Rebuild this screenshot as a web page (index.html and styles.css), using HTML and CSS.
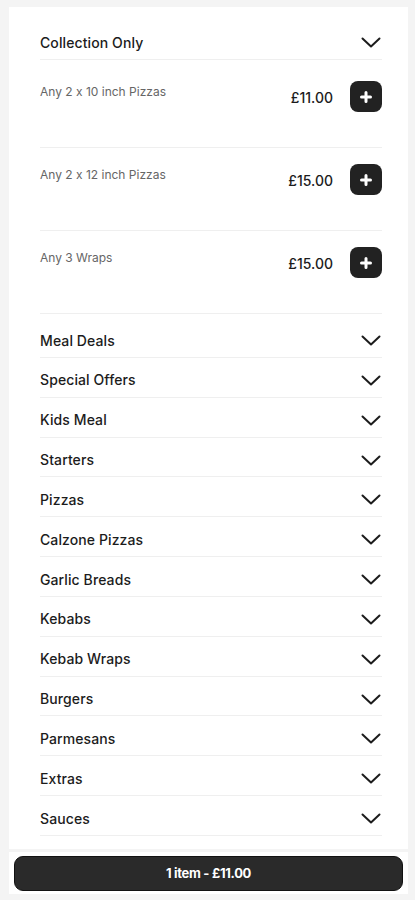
FILE: index.html
```html
<!DOCTYPE html>
<html lang="en">
<head>
<meta charset="utf-8">
<title>Menu</title>
<link rel="stylesheet" href="styles.css">
</head>
<body>
<div class="page">
  <main class="card">
    <section class="group">
      <div class="group-head">
        <span class="cat-title">Collection Only</span>
        <svg class="chev" viewBox="0 0 20 11" width="20" height="11"><path d="M1.5 1.5 L10 9.5 L18.5 1.5" fill="none" stroke="#1c1c1c" stroke-width="2" stroke-linecap="round" stroke-linejoin="round"/></svg>
      </div>
      <div class="item first">
        <span class="item-name">Any 2 x 10 inch Pizzas</span>
        <div class="item-right">
          <span class="price">£11.00</span>
          <button class="add"><svg viewBox="0 0 12 12" width="12" height="12"><path d="M6 1.5 V10.5 M1.5 6 H10.5" stroke="#fff" stroke-width="3" stroke-linecap="round"/></svg></button>
        </div>
      </div>
      <div class="item">
        <span class="item-name">Any 2 x 12 inch Pizzas</span>
        <div class="item-right">
          <span class="price">£15.00</span>
          <button class="add"><svg viewBox="0 0 12 12" width="12" height="12"><path d="M6 1.5 V10.5 M1.5 6 H10.5" stroke="#fff" stroke-width="3" stroke-linecap="round"/></svg></button>
        </div>
      </div>
      <div class="item">
        <span class="item-name">Any 3 Wraps</span>
        <div class="item-right">
          <span class="price">£15.00</span>
          <button class="add"><svg viewBox="0 0 12 12" width="12" height="12"><path d="M6 1.5 V10.5 M1.5 6 H10.5" stroke="#fff" stroke-width="3" stroke-linecap="round"/></svg></button>
        </div>
      </div>
    </section>
    <ul class="cats">
      <li class="cat first"><span class="cat-title">Meal Deals</span><svg class="chev" viewBox="0 0 20 11" width="20" height="11"><path d="M1.5 1.5 L10 9.5 L18.5 1.5" fill="none" stroke="#1c1c1c" stroke-width="2" stroke-linecap="round" stroke-linejoin="round"/></svg></li>
      <li class="cat"><span class="cat-title">Special Offers</span><svg class="chev" viewBox="0 0 20 11" width="20" height="11"><path d="M1.5 1.5 L10 9.5 L18.5 1.5" fill="none" stroke="#1c1c1c" stroke-width="2" stroke-linecap="round" stroke-linejoin="round"/></svg></li>
      <li class="cat"><span class="cat-title">Kids Meal</span><svg class="chev" viewBox="0 0 20 11" width="20" height="11"><path d="M1.5 1.5 L10 9.5 L18.5 1.5" fill="none" stroke="#1c1c1c" stroke-width="2" stroke-linecap="round" stroke-linejoin="round"/></svg></li>
      <li class="cat"><span class="cat-title">Starters</span><svg class="chev" viewBox="0 0 20 11" width="20" height="11"><path d="M1.5 1.5 L10 9.5 L18.5 1.5" fill="none" stroke="#1c1c1c" stroke-width="2" stroke-linecap="round" stroke-linejoin="round"/></svg></li>
      <li class="cat"><span class="cat-title">Pizzas</span><svg class="chev" viewBox="0 0 20 11" width="20" height="11"><path d="M1.5 1.5 L10 9.5 L18.5 1.5" fill="none" stroke="#1c1c1c" stroke-width="2" stroke-linecap="round" stroke-linejoin="round"/></svg></li>
      <li class="cat"><span class="cat-title">Calzone Pizzas</span><svg class="chev" viewBox="0 0 20 11" width="20" height="11"><path d="M1.5 1.5 L10 9.5 L18.5 1.5" fill="none" stroke="#1c1c1c" stroke-width="2" stroke-linecap="round" stroke-linejoin="round"/></svg></li>
      <li class="cat"><span class="cat-title">Garlic Breads</span><svg class="chev" viewBox="0 0 20 11" width="20" height="11"><path d="M1.5 1.5 L10 9.5 L18.5 1.5" fill="none" stroke="#1c1c1c" stroke-width="2" stroke-linecap="round" stroke-linejoin="round"/></svg></li>
      <li class="cat"><span class="cat-title">Kebabs</span><svg class="chev" viewBox="0 0 20 11" width="20" height="11"><path d="M1.5 1.5 L10 9.5 L18.5 1.5" fill="none" stroke="#1c1c1c" stroke-width="2" stroke-linecap="round" stroke-linejoin="round"/></svg></li>
      <li class="cat"><span class="cat-title">Kebab Wraps</span><svg class="chev" viewBox="0 0 20 11" width="20" height="11"><path d="M1.5 1.5 L10 9.5 L18.5 1.5" fill="none" stroke="#1c1c1c" stroke-width="2" stroke-linecap="round" stroke-linejoin="round"/></svg></li>
      <li class="cat"><span class="cat-title">Burgers</span><svg class="chev" viewBox="0 0 20 11" width="20" height="11"><path d="M1.5 1.5 L10 9.5 L18.5 1.5" fill="none" stroke="#1c1c1c" stroke-width="2" stroke-linecap="round" stroke-linejoin="round"/></svg></li>
      <li class="cat"><span class="cat-title">Parmesans</span><svg class="chev" viewBox="0 0 20 11" width="20" height="11"><path d="M1.5 1.5 L10 9.5 L18.5 1.5" fill="none" stroke="#1c1c1c" stroke-width="2" stroke-linecap="round" stroke-linejoin="round"/></svg></li>
      <li class="cat"><span class="cat-title">Extras</span><svg class="chev" viewBox="0 0 20 11" width="20" height="11"><path d="M1.5 1.5 L10 9.5 L18.5 1.5" fill="none" stroke="#1c1c1c" stroke-width="2" stroke-linecap="round" stroke-linejoin="round"/></svg></li>
      <li class="cat"><span class="cat-title">Sauces</span><svg class="chev" viewBox="0 0 20 11" width="20" height="11"><path d="M1.5 1.5 L10 9.5 L18.5 1.5" fill="none" stroke="#1c1c1c" stroke-width="2" stroke-linecap="round" stroke-linejoin="round"/></svg></li>
    </ul>
  </main>
  <footer class="basket-bar">
    <button class="basket">1 item - £11.00</button>
  </footer>
</div>
</body>
</html>
```

FILE: styles.css
```css
* { box-sizing: border-box; }
html, body { margin: 0; padding: 0; }
body {
  background: #f4f4f4;
  font-family: Inter, "Noto Sans", "Liberation Sans", sans-serif;
  font-feature-settings: "calt" 0;
  color: #1c1c1c;
  width: 415px;
  height: 900px;
  overflow: hidden;
}
.page {
  padding: 7px 7px 0 9px;
  display: flex;
  flex-direction: column;
  gap: 3px;
}
.card {
  background: #fff;
  padding: 0 26px 13px 31px;
}
.group-head {
  display: flex;
  justify-content: space-between;
  align-items: center;
  padding: 25px 0 6px;
  border-bottom: 1px solid #efefef;
  height: 53px;
}
.cat-title {
  font-size: 14px;
  font-weight: 500;
  line-height: 20px;
  letter-spacing: 0.1px;
  color: #1c1c1c;
}
.chev { display: block; flex: none; margin-right: 1px; }
.item {
  display: flex;
  justify-content: space-between;
  align-items: flex-start;
  padding: 16px 0 35px;
  border-bottom: 1px solid #efefef;
}
.item.first { padding-top: 21px; }
.item-name {
  font-size: 12px;
  font-weight: 400;
  color: #666;
  line-height: 14px;
  margin-top: 4px;
}
.item-right {
  display: flex;
  align-items: center;
  gap: 17px;
}
.price {
  font-size: 14px;
  font-weight: 500;
  color: #1c1c1c;
  margin-top: 2px;
}
.add {
  width: 32px;
  height: 31px;
  border: 0;
  border-radius: 8px;
  background: #222;
  display: flex;
  align-items: center;
  justify-content: center;
  padding: 0;
}
.add svg { display: block; }
.cats { list-style: none; margin: 0; padding: 0; }
.cat {
  display: flex;
  justify-content: space-between;
  align-items: center;
  height: 39.83px;
  padding-top: 6px;
  border-bottom: 1px solid #efefef;
}
.cat.first { height: 44px; padding-top: 10px; }
.basket-bar {
  background: #fff;
  padding: 4px 5px 3px;
}
.basket {
  display: block;
  width: 100%;
  height: 35px;
  border: 1px solid #111;
  border-radius: 9px;
  background: #2a2a2a;
  color: #fff;
  font-family: Inter, "Noto Sans", "Liberation Sans", sans-serif;
  font-size: 13px;
  font-weight: 700;
  letter-spacing: -0.3px;
}
```
